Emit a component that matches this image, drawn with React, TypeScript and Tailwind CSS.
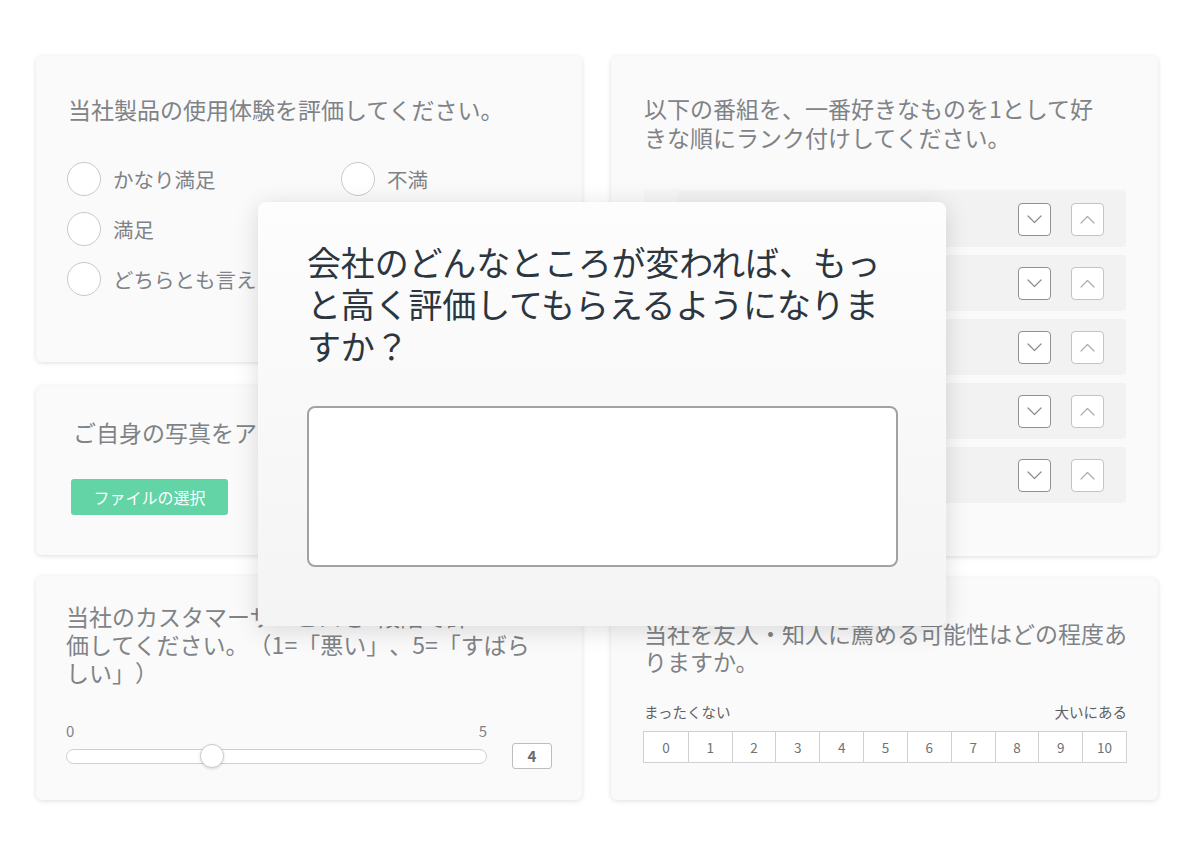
import React from "react";

const font = { fontFamily: '"Noto Sans CJK JP", "Noto Sans", sans-serif' };

function Radio({ label }: { label: string }) {
  return (
    <div className="flex items-center gap-[12px] h-[34px]">
      <div className="w-[34px] h-[34px] rounded-full border-[1.5px] border-[#c9c9c9] bg-white shrink-0" />
      <span className="text-[20.5px] text-[#7f8387] whitespace-nowrap">{label}</span>
    </div>
  );
}

function Chevron({ up, color }: { up?: boolean; color: string }) {
  return (
    <svg width="15" height="9" viewBox="0 0 15 9" fill="none">
      <path
        d={up ? "M1 8L7.5 1.5L14 8" : "M1 1L7.5 7.5L14 1"}
        stroke={color}
        strokeWidth="1.2"
        strokeLinecap="round"
        strokeLinejoin="round"
      />
    </svg>
  );
}

function RankRow({ indent }: { indent?: boolean }) {
  return (
    <div className={`h-[56px] bg-[#f2f2f2] rounded-[3px] flex items-center justify-end gap-[20px] pr-[22px] ${indent ? "ml-[34px]" : ""}`}>
      <div className="w-[33px] h-[33px] rounded-[4px] border-[1.5px] border-[#8e9094] bg-white flex items-center justify-center">
        <Chevron color="#8a8c90" />
      </div>
      <div className="w-[33px] h-[33px] rounded-[4px] border-[1.5px] border-[#c3c4c6] bg-white flex items-center justify-center">
        <Chevron up color="#a9abae" />
      </div>
    </div>
  );
}

export default function App() {
  const nums = [0, 1, 2, 3, 4, 5, 6, 7, 8, 9, 10];
  return (
    <div className="relative w-[1192px] h-[856px] bg-white overflow-hidden [text-spacing-trim:space-all]" style={font}>
      <div className="flex gap-[29px] pt-[56px] pl-[36px]">
        {/* Left column */}
        <div className="w-[546px] flex flex-col">
          {/* Card 1 */}
          <div className="h-[306px] bg-[#fafafa] rounded-[6px] shadow-[0_1px_5px_rgba(0,0,0,0.13)] pl-[32px] pt-[39px]">
            <div className="text-[23px] leading-[29px] text-[#7f8387]">当社製品の使用体験を評価してください。</div>
            <div className="grid grid-cols-[274px_1fr] mt-[38px] gap-y-[16px] -ml-[1px]">
              <Radio label="かなり満足" />
              <Radio label="不満" />
              <Radio label="満足" />
              <Radio label="非常に不満" />
              <Radio label="どちらとも言えない" />
            </div>
          </div>
          {/* Card 2 */}
          <div className="mt-[24px] h-[169px] bg-[#fafafa] rounded-[6px] shadow-[0_1px_5px_rgba(0,0,0,0.13)] pl-[37px] pt-[32px]">
            <div className="text-[23px] leading-[29px] text-[#7f8387]">ご自身の写真をアップロードしてください。</div>
            <div className="mt-[32px] -ml-[2px] w-[157px] h-[36px] bg-[#62d4a6] rounded-[3px] flex items-center justify-center text-white text-[16px]">
              ファイルの選択
            </div>
          </div>
          {/* Card 3 */}
          <div className="mt-[21px] h-[224px] bg-[#fafafa] rounded-[6px] shadow-[0_1px_5px_rgba(0,0,0,0.13)] pl-[30px] pr-[30px] pt-[26px]">
            <div className="text-[23px] leading-[28px] text-[#7f8387]">
              当社のカスタマーサービスを5段階で評<br />価してください。（1=「悪い」、5=「すばら<br />しい」）
            </div>
            <div className="mt-[36px] flex items-end gap-[25px]">
              <div className="w-[421px]">
                <div className="flex justify-between text-[15px] leading-[18px] text-[#7f8387]">
                  <span>0</span>
                  <span>5</span>
                </div>
                <div className="relative mt-[9px] h-[15px] rounded-full border-[1.5px] border-[#cfcfcf] bg-white">
                  <div className="absolute left-[133px] -top-[6px] w-[24px] h-[24px] rounded-full bg-white border-[1.5px] border-[#cbcbcb] shadow-[0_1px_3px_rgba(0,0,0,0.15)]" />
                </div>
              </div>
              <div className="w-[40px] h-[26px] -mb-[5px] border-[1.5px] border-[#bdbdbd] rounded-[3px] bg-white flex items-center justify-center text-[15px] font-bold text-[#6a6d70]">
                4
              </div>
            </div>
          </div>
        </div>

        {/* Right column */}
        <div className="w-[547px] flex flex-col">
          <div className="h-[500px] bg-[#fafafa] rounded-[6px] shadow-[0_1px_5px_rgba(0,0,0,0.13)] pl-[33px] pr-[20px] pt-[38px]">
            <div className="text-[23px] leading-[29px] text-[#7f8387]">
              以下の番組を、一番好きなものを1として好<br />きな順にランク付けしてください。
            </div>
            <div className="mt-[37px] mr-[12px] flex flex-col gap-[8px]">
              <div className="bg-[#f6f6f6] pt-[2px] rounded-[3px]">
                <RankRow indent />
              </div>
              <RankRow />
              <RankRow />
              <RankRow />
              <RankRow />
            </div>
          </div>
          <div className="mt-[22px] h-[222px] bg-[#fafafa] rounded-[6px] shadow-[0_1px_5px_rgba(0,0,0,0.13)] pl-[33px] pr-[20px] pt-[41px]">
            <div className="text-[23px] leading-[28px] text-[#7f8387]">
              当社を友人・知人に薦める可能性はどの程度あ<br />りますか。
            </div>
            <div className="mt-[28px] w-[483px] flex justify-between text-[14.5px] leading-[18px] text-[#5e6165]">
              <span>まったくない</span>
              <span>大いにある</span>
            </div>
            <div className="mt-[10px] -ml-[1px] grid grid-cols-11 w-[484px] h-[32px] border-[1.5px] border-[#d0d0d0] bg-white">
              {nums.map((n) => (
                <div
                  key={n}
                  className={`flex items-center justify-center text-[13.5px] text-[#6f7275] ${n > 0 ? "border-l-[1.5px] border-[#d0d0d0]" : ""}`}
                >
                  {n}
                </div>
              ))}
            </div>
          </div>
        </div>
      </div>

      {/* Modal overlay */}
      <div className="absolute left-[258px] top-[202px] w-[688px] h-[424px] rounded-[8px] bg-gradient-to-b from-[#fdfdfd] to-[#f4f4f4] shadow-[0_4px_24px_rgba(0,0,0,0.14)] px-[49px] pt-[39px]">
        <div className="text-[34px] leading-[42px] text-[#2c3640] tracking-[-0.005em]">
          会社のどんなところが変われば、もっ<br />と高く評価してもらえるようになりま<br />すか？
        </div>
        <div className="mt-[39px] w-[591px] h-[161px] rounded-[8px] border-2 border-[#a2a2a2] bg-white" />
      </div>
    </div>
  );
}
